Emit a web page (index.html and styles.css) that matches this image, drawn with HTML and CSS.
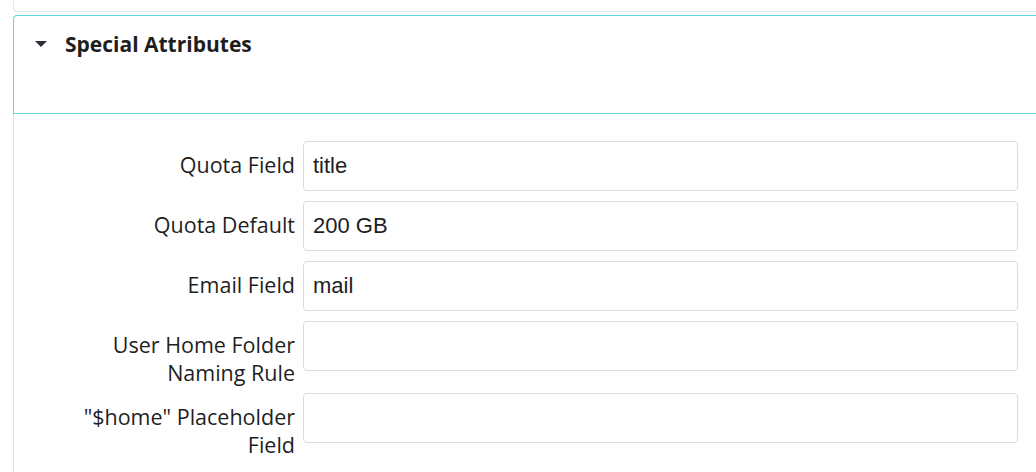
FILE: index.html
```html
<!DOCTYPE html>
<html>
<head>
<meta charset="utf-8">
<link rel="stylesheet" href="styles.css">
</head>
<body>
<div class="page">
  <div class="prev-card"></div>
  <div class="section">
    <div class="section-head">
      <span class="caret"></span>
      <h2 class="section-title">Special Attributes</h2>
    </div>
    <div class="section-body">
      <div class="row">
        <label class="label">Quota Field</label>
        <div class="input">title</div>
      </div>
      <div class="row">
        <label class="label">Quota Default</label>
        <div class="input">200 GB</div>
      </div>
      <div class="row">
        <label class="label">Email Field</label>
        <div class="input">mail</div>
      </div>
      <div class="row">
        <label class="label">User Home Folder Naming Rule</label>
        <div class="input"></div>
      </div>
      <div class="row">
        <label class="label">"$home" Placeholder Field</label>
        <div class="input"></div>
      </div>
    </div>
  </div>
</div>
</body>
</html>
```

FILE: styles.css
```css
html, body {
  margin: 0;
  padding: 0;
  background: #ffffff;
  overflow: hidden;
}
.page {
  padding-left: 13px;
}
.prev-card {
  height: 11px;
  border: 1px solid #e6e6e6;
  border-top: none;
  border-right: none;
  border-bottom-left-radius: 4px;
  background: #ffffff;
}
.section {
  margin-top: 3px;
}
.section-head {
  height: 97px;
  border: 1px solid #5fd6de;
  border-right: none;
  border-top-left-radius: 4px;
  display: flex;
  align-items: flex-start;
  padding-left: 21px;
  box-sizing: content-box;
}
.caret {
  width: 0;
  height: 0;
  margin-top: 25px;
  border-left: 6px solid transparent;
  border-right: 6px solid transparent;
  border-top: 6px solid #2b2f3a;
}
.section-title {
  margin: 14px 0 0 18px;
  font-family: "Open Sans", "Noto Sans", sans-serif;
  font-weight: 700;
  font-size: 21px;
  line-height: 28px;
  color: #1e1e1e;
}
.section-body {
  border-left: 1px solid #e3e3e3;
  padding: 27px 18px 20px 0;
  display: flex;
  flex-direction: column;
  gap: 6px;
}
.row {
  display: flex;
  align-items: flex-start;
}
.label {
  width: 228px;
  flex: none;
  margin: 0 8px 0 53px;
  text-align: right;
  padding-top: 10px;
  font-family: "Open Sans", "Noto Sans", sans-serif;
  font-size: 21.5px;
  line-height: 28px;
  color: #1f1f1f;
}
.input {
  flex: 1;
  height: 48px;
  margin-bottom: 4px;
  border: 1px solid #dcdcdc;
  border-radius: 4px;
  padding: 0 9px;
  font-family: "Liberation Sans", Arial, sans-serif;
  font-size: 22px;
  line-height: 48px;
  color: #1e1e1e;
  background: #ffffff;
}
```
